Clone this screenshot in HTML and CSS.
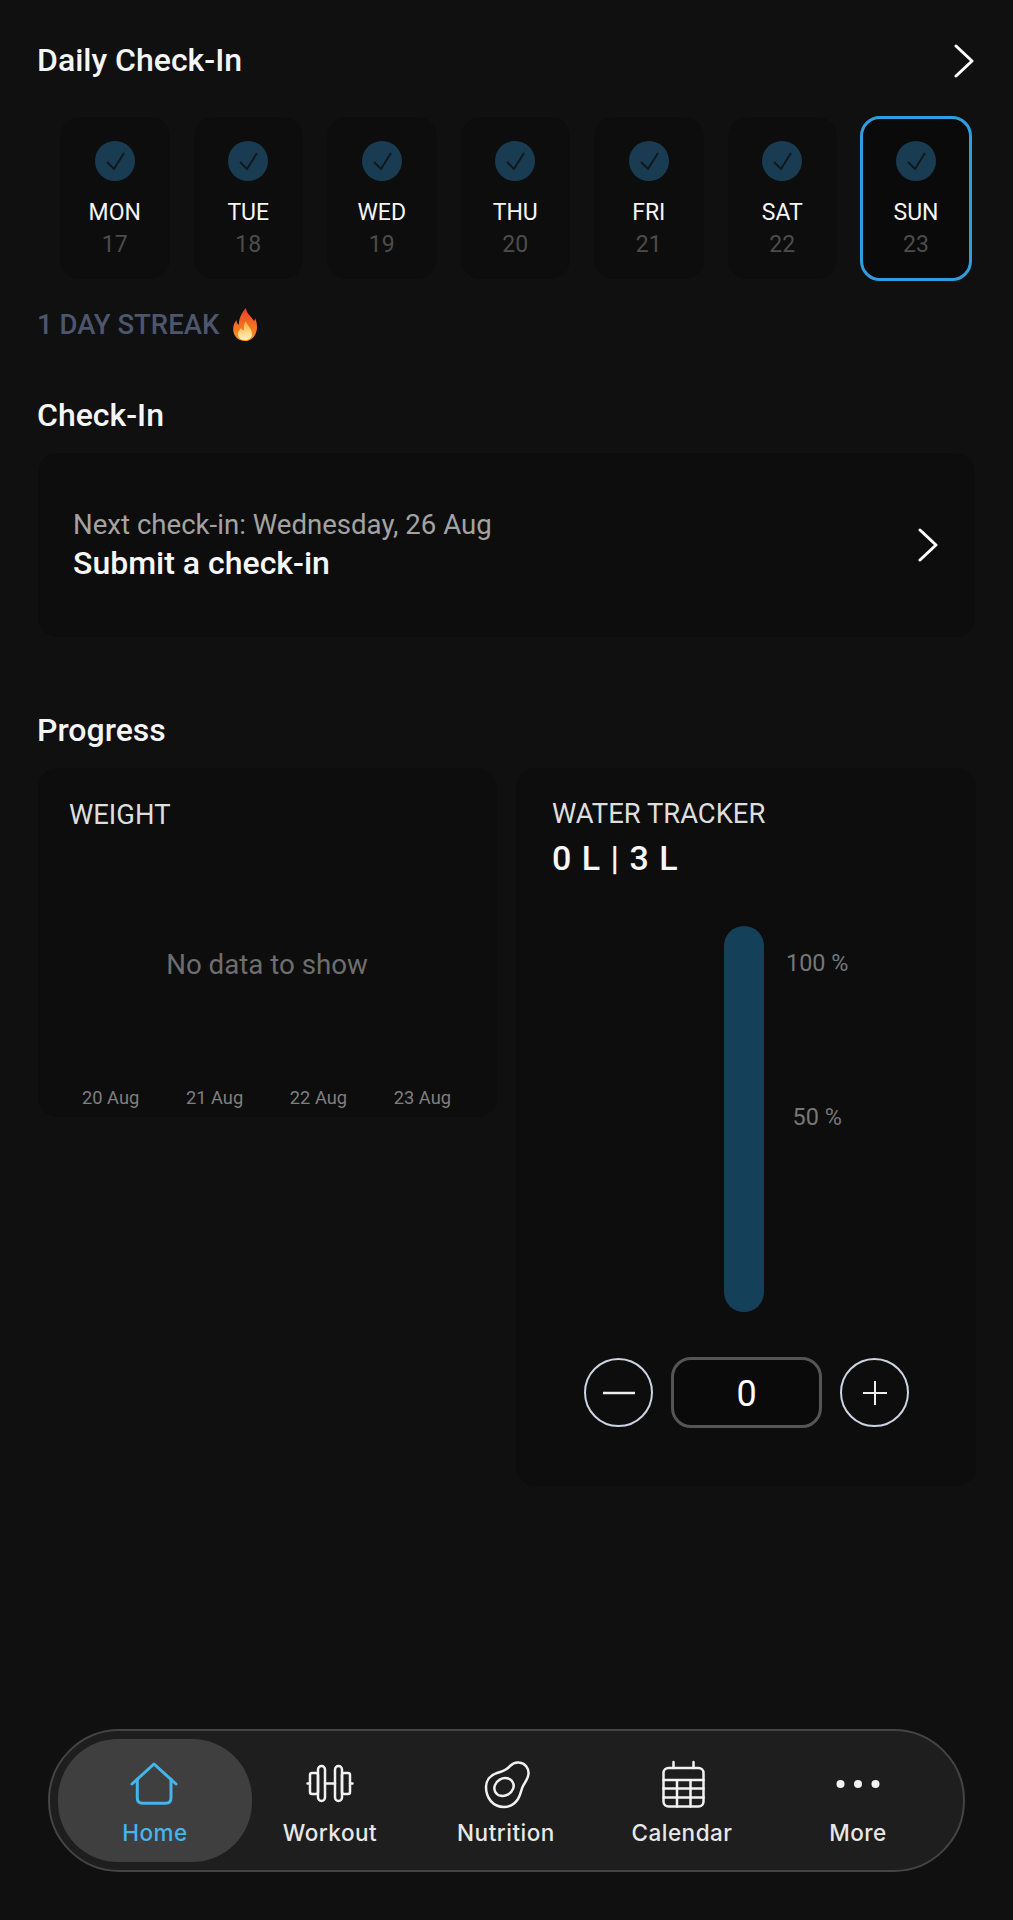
FILE: index.html
```html
<!DOCTYPE html>
<html lang="en">
<head>
<meta charset="utf-8">
<title>Home</title>
<link rel="stylesheet" href="styles.css">
</head>
<body>
<div class="app">
  <header class="section-head">
    <h2 class="title">Daily Check-In</h2>
    <svg class="chevron" viewBox="0 0 20 34"><path d="M2 2 L18 17 L2 32"/></svg>
  </header>

  <div class="week">
    <div class="day">
      <span class="tick"><svg viewBox="0 0 40 40"><path d="M12 21 L19 28 L29 12"/></svg></span>
      <span class="day-name">MON</span><span class="day-num">17</span>
    </div>
    <div class="day">
      <span class="tick"><svg viewBox="0 0 40 40"><path d="M12 21 L19 28 L29 12"/></svg></span>
      <span class="day-name">TUE</span><span class="day-num">18</span>
    </div>
    <div class="day">
      <span class="tick"><svg viewBox="0 0 40 40"><path d="M12 21 L19 28 L29 12"/></svg></span>
      <span class="day-name">WED</span><span class="day-num">19</span>
    </div>
    <div class="day">
      <span class="tick"><svg viewBox="0 0 40 40"><path d="M12 21 L19 28 L29 12"/></svg></span>
      <span class="day-name">THU</span><span class="day-num">20</span>
    </div>
    <div class="day">
      <span class="tick"><svg viewBox="0 0 40 40"><path d="M12 21 L19 28 L29 12"/></svg></span>
      <span class="day-name">FRI</span><span class="day-num">21</span>
    </div>
    <div class="day">
      <span class="tick"><svg viewBox="0 0 40 40"><path d="M12 21 L19 28 L29 12"/></svg></span>
      <span class="day-name">SAT</span><span class="day-num">22</span>
    </div>
    <div class="day day-today">
      <span class="tick"><svg viewBox="0 0 40 40"><path d="M12 21 L19 28 L29 12"/></svg></span>
      <span class="day-name">SUN</span><span class="day-num">23</span>
    </div>
  </div>

  <p class="streak">1 DAY STREAK
    <svg class="flame" viewBox="0 0 24 33">
      <defs>
        <linearGradient id="flameOuter" x1="0" y1="0" x2="0" y2="1">
          <stop offset="0" stop-color="#e8402a"/>
          <stop offset="0.6" stop-color="#f7741f"/>
          <stop offset="1" stop-color="#ff9a1f"/>
        </linearGradient>
        <linearGradient id="flameInner" x1="0" y1="0" x2="0" y2="1">
          <stop offset="0" stop-color="#ffb23e"/>
          <stop offset="1" stop-color="#fff0b8"/>
        </linearGradient>
      </defs>
      <path fill="url(#flameOuter)" d="M13 0 C13 5 18 8 21 13 C22 12 22 11 22 10 C24 14 24.500 19 23.500 23 C22 29 17.500 33 12 33 C6 33 1.500 29 0.500 24 C-0.500 19 1 15 3.500 12 C3.500 14 4.500 16 6 17 C5.500 11 9 4 13 0 Z"/>
      <path fill="url(#flameInner)" d="M13 13 C14 18 19 20 19 26 C19 30 16 32 12 32 C8 32 5 30 5 26 C5 23 7 22 8 20 C9 22 10 22.500 11 22 C10.500 19 11 16 13 13 Z"/>
    </svg>
  </p>

  <h2 class="title title-checkin">Check-In</h2>
  <a class="checkin-card">
    <div class="checkin-copy">
      <span class="checkin-next">Next check-in: Wednesday, 26 Aug</span>
      <span class="checkin-action">Submit a check-in</span>
    </div>
    <svg class="chevron" viewBox="0 0 20 34"><path d="M2 2 L18 17 L2 32"/></svg>
  </a>

  <h2 class="title title-progress">Progress</h2>
  <div class="progress">
    <section class="card weight">
      <h3 class="card-label">WEIGHT</h3>
      <p class="empty">No data to show</p>
      <div class="axis"><span>20 Aug</span><span>21 Aug</span><span>22 Aug</span><span>23 Aug</span></div>
    </section>

    <section class="card water">
      <h3 class="card-label">WATER TRACKER</h3>
      <p class="water-total">0 L | 3 L</p>
      <div class="gauge">
        <div class="gauge-bar"></div>
        <div class="gauge-scale"><span>100 %</span><span>50 %</span></div>
      </div>
      <div class="stepper">
        <button class="step"><svg viewBox="0 0 34 34"><path d="M1 17 H33"/></svg></button>
        <div class="step-value">0</div>
        <button class="step"><svg class="plus" viewBox="0 0 24 24"><path d="M0 12 H24 M12 0 V24"/></svg></button>
      </div>
    </section>
  </div>

  <nav class="tabbar">
    <a class="tab tab-active">
      <svg class="tab-icon" viewBox="0 0 46 46"><path d="M0 22 L22 2 L44 22"/><path d="M5.300 17 V36 Q5.300 41.300 10.500 41.300 H33.800 Q39 41.300 39 36 V17"/></svg>
      <span>Home</span>
    </a>
    <a class="tab">
      <svg class="tab-icon tab-icon-thin" viewBox="0 0 46 46">
        <rect x="3" y="11" width="8" height="21" rx="2"/><rect x="11" y="4" width="7" height="35" rx="3.500"/>
        <rect x="28" y="4" width="7" height="35" rx="3.500"/><rect x="35" y="11" width="8" height="21" rx="2"/>
        <path d="M18 21.500 H28 M0.500 21.500 H3 M43 21.500 H45.500"/>
      </svg>
      <span>Workout</span>
    </a>
    <a class="tab">
      <svg class="tab-icon tab-icon-thin" viewBox="0 0 46 46">
        <path d="M3 25 C3 18 8 13 14 11 C20 9 24 8 27 4 C30 1 33 0 36 0.500 C42 1 46 6 45.500 12 C45 17 42 20 40 24 C38 28 38 32 35 37 C31 43 26 45 21 45 C10 45 3 36 3 25 Z"/>
        <ellipse cx="21" cy="25" rx="10" ry="8.500" transform="rotate(-30 21 25)"/>
      </svg>
      <span>Nutrition</span>
    </a>
    <a class="tab">
      <svg class="tab-icon tab-icon-thin" viewBox="0 0 46 46">
        <rect x="4.500" y="6" width="40" height="38.500" rx="5"/>
        <path d="M14.500 0 V6 M34.500 0 V6 M4.500 18 H44.500 M4.500 26.500 H44.500 M4.500 35.500 H44.500 M18 18 V44.500 M31.500 18 V44.500"/>
      </svg>
      <span>Calendar</span>
    </a>
    <a class="tab">
      <svg class="tab-icon tab-icon-dots" viewBox="0 0 46 46">
        <circle cx="5.500" cy="22" r="4"/><circle cx="23" cy="22" r="4"/><circle cx="40.500" cy="22" r="4"/>
      </svg>
      <span>More</span>
    </a>
  </nav>
</div>
</body>
</html>
```
FILE: styles.css
```css
* { box-sizing: border-box; }

html, body { margin: 0; padding: 0; }

body {
  background: #101010;
  color: #fff;
  font-family: Roboto, "Liberation Sans", sans-serif;
}

.app {
  height: 1920px;
  padding: 0 37px;
  display: flex;
  flex-direction: column;
}

.title {
  margin: 0;
  font-size: 32px;
  line-height: 36px;
  font-weight: 500;
  color: #f5f5f5;
}

.section-head {
  display: flex;
  justify-content: space-between;
  align-items: flex-start;
  padding-top: 42px;
  padding-right: 2px;
}

.section-head .chevron { margin-top: 2px; }

.chevron {
  width: 20px;
  height: 34px;
  fill: none;
  stroke: #fff;
  stroke-width: 3px;
  stroke-linecap: round;
  stroke-linejoin: round;
}

/* Week strip */
.week {
  display: flex;
  gap: 24px;
  margin: 39px 0 0 23px;
}

.day {
  width: 109.500px;
  height: 162px;
  padding-top: 24px;
  background: #0d0d0d;
  border-radius: 20px;
  display: flex;
  flex-direction: column;
  align-items: center;
}

.day-today {
  width: 112px;
  height: 165px;
  margin: -1px -2px -1px -1px;
  padding-top: 23px;
  border: 3px solid #2f9de0;
  background: #0a0a0a;
}

.tick {
  width: 40px;
  height: 40px;
  border-radius: 50%;
  background: #1a3c52;
  flex: none;
  margin-bottom: 18px;
}

.day-today .tick { margin-top: -1px; }

.tick svg {
  display: block;
  width: 40px;
  height: 40px;
  fill: none;
  stroke: #10181d;
  stroke-width: 2px;
}

.day-name {
  font-size: 23px;
  line-height: 28px;
  color: #f5f5f5;
}

.day-num {
  font-size: 23px;
  line-height: 26px;
  margin-top: 5px;
  color: #4c4c4c;
}

.streak {
  margin: 26px 0 0;
  height: 36px;
  display: flex;
  align-items: center;
  gap: 14px;
  font-size: 27.500px;
  font-weight: 500;
  color: #4d566d;
}

.flame { width: 24px; height: 33px; flex: none; }

.title-checkin { margin-top: 55px; }

.checkin-card {
  margin: 20px 1px 0 1px;
  height: 184px;
  padding: 0 37px 0 35px;
  background: #0d0d0d;
  border-radius: 20px;
  display: flex;
  justify-content: space-between;
  align-items: center;
}

.checkin-copy { display: flex; flex-direction: column; margin-top: -3px; }

.checkin-next {
  font-size: 27.600px;
  line-height: 38px;
  color: #a3a3a3;
}

.checkin-action {
  font-size: 32px;
  line-height: 38px;
  font-weight: 500;
  color: #f7f7f7;
}

.title-progress { margin-top: 75px; }

/* Progress cards */
.progress {
  margin: 20px 0 0 1px;
  display: flex;
  gap: 19px;
  align-items: flex-start;
}

.card {
  background: #0d0d0d;
  border-radius: 20px;
}

.card-label {
  margin: 0;
  font-size: 27.400px;
  line-height: 32px;
  font-weight: 400;
  color: #dedede;
}

.weight {
  width: 459px;
  height: 349px;
  padding: 31px 32px 0 31px;
  display: flex;
  flex-direction: column;
}

.empty {
  margin: 116px 0 0;
  text-align: center;
  font-size: 27.700px;
  line-height: 36px;
  color: #6e6e6e;
}

.axis {
  margin: 103px 0 0 13px;
  width: 369px;
  display: flex;
  justify-content: space-between;
  font-size: 18.300px;
  line-height: 24px;
  color: #7f7f7f;
}

.water {
  width: 460px;
  height: 718px;
  padding: 30px 37px 0 36px;
}

.water-total {
  margin: 7px 0 0;
  font-size: 34px;
  line-height: 42px;
  font-weight: 500;
  letter-spacing: 1px;
  color: #f7f7f7;
}

.gauge {
  margin: 47px 0 0 172px;
  display: flex;
  gap: 22px;
  align-items: flex-start;
}

.gauge-bar {
  width: 40px;
  height: 386px;
  background: #14405a;
  border-radius: 20px;
}

.gauge-scale {
  display: flex;
  flex-direction: column;
  align-items: center;
  gap: 126px;
  padding-top: 23px;
  font-size: 23.400px;
  line-height: 28px;
  color: #777;
}

.stepper {
  margin: 45px 0 0 32px;
  display: flex;
  align-items: center;
  gap: 18px;
}

.step {
  width: 69px;
  height: 69px;
  padding: 0;
  border: 2px solid #ccd3e2;
  border-radius: 50%;
  background: transparent;
  display: flex;
  justify-content: center;
  align-items: center;
}

.step svg {
  width: 34px;
  height: 34px;
  fill: none;
  stroke: #eee;
  stroke-width: 2.500px;
}

.step svg.plus { width: 24px; height: 24px; stroke-width: 2px; }

.step-value {
  width: 151px;
  height: 71px;
  padding-top: 2px;
  border: 3px solid #555;
  border-radius: 20px;
  background: #0a0a0a;
  display: flex;
  justify-content: center;
  align-items: center;
  font-size: 36px;
  color: #fff;
}

/* Bottom navigation */
.tabbar {
  margin: auto 11px 48px;
  height: 143px;
  padding: 8px 16px;
  background: #1e1e1e;
  border: 2px solid #444;
  border-radius: 72px;
  display: flex;
  align-items: stretch;
}

.tab {
  width: 176px;
  flex: none;
  display: flex;
  flex-direction: column;
  align-items: center;
  padding-top: 23px;
  font-family: Inter, Roboto, sans-serif;
  font-size: 22.500px;
  font-weight: 500;
  letter-spacing: 0.500px;
  color: #e8e8e8;
}

.tab span { margin-top: 10px; line-height: 30px; }

.tab-active {
  width: 194px;
  margin: 0 -10px 0 -8px;
  border-radius: 60px;
  background: #3f3f3f;
  color: #45b5ea;
}

.tab-icon {
  height: 46px;
  width: 46px;
  flex: none;
  overflow: visible;
  fill: none;
  stroke: #f2f2f2;
  stroke-width: 3px;
  stroke-linecap: round;
  stroke-linejoin: round;
}

.tab-icon-thin { stroke-width: 2.500px; }

.tab-active .tab-icon { stroke: #45b5ea; }

.tab-icon-dots { fill: #f2f2f2; stroke: none; }
```
